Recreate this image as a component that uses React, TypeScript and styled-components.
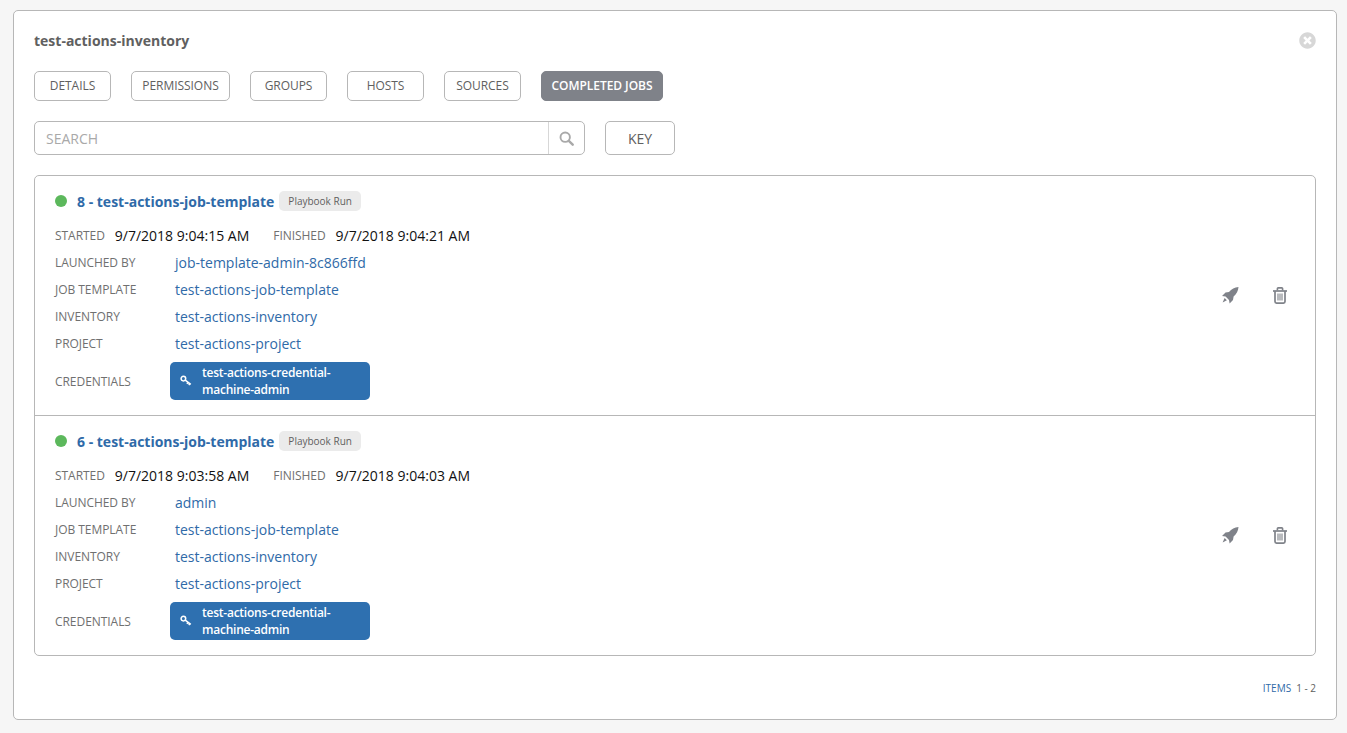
import styled, { createGlobalStyle } from 'styled-components'
import { FaTimesCircle } from 'react-icons/fa'

const GlobalStyle = createGlobalStyle`
  html, body {
    margin: 0;
    padding: 0;
    background: #f6f6f6;
  }
  body {
    font-family: 'Open Sans', 'Liberation Sans', sans-serif;
    color: #161b1f;
  }
  * {
    box-sizing: border-box;
  }
`

const Page = styled.div`
  padding: 10px 10px 13px 13px;
  height: 733px;
`

const Panel = styled.section`
  height: 710px;
  background: #fff;
  border: 1px solid #b7b7b7;
  border-radius: 5px;
  padding: 20px;
  display: flex;
  flex-direction: column;
`

const PanelHeader = styled.header`
  display: flex;
  justify-content: space-between;
  align-items: center;
  height: 18px;
  margin-bottom: 22px;
`

const PanelTitle = styled.h1`
  margin: 0;
  font-size: 14px;
  font-weight: 700;
  color: #606060;
`

const CloseIcon = styled(FaTimesCircle)`
  font-size: 17px;
  color: #d7d7d7;
`

const Tabs = styled.nav`
  display: flex;
  gap: 20px;
  margin-bottom: 20px;
`

const Tab = styled.button<{ $active?: boolean; $width: number }>`
  width: ${({ $width }) => $width}px;
  height: 30px;
  padding: 0 0 2px;
  font-family: inherit;
  font-size: 12px;
  letter-spacing: -0.05px;
  border-radius: 5px;
  border: 1px solid ${({ $active }) => ($active ? '#7f8289' : '#b7b7b7')};
  background: ${({ $active }) => ($active ? '#7f8289' : '#fff')};
  color: ${({ $active }) => ($active ? '#fff' : '#606060')};
  font-weight: ${({ $active }) => ($active ? 600 : 400)};
`

const SearchRow = styled.div`
  display: flex;
  gap: 20px;
  margin-bottom: 20px;
`

const SearchBox = styled.div`
  display: flex;
  width: 551px;
  height: 34px;
  border: 1px solid #b7b7b7;
  border-radius: 5px;
`

const SearchPlaceholder = styled.div`
  flex: 1;
  display: flex;
  align-items: center;
  padding-left: 11px;
  font-size: 14px;
  color: #a9a9a9;
`

const SearchButton = styled.div`
  width: 36px;
  display: flex;
  align-items: center;
  justify-content: center;
  border-left: 1px solid #d7d7d7;
`

const KeyButton = styled.button`
  width: 70px;
  height: 34px;
  padding: 0;
  font-family: inherit;
  font-size: 14px;
  color: #606060;
  background: #fff;
  border: 1px solid #b7b7b7;
  border-radius: 5px;
`

const JobList = styled.div`
  border: 1px solid #b7b7b7;
  border-radius: 5px;
`

const JobRow = styled.article`
  display: flex;
  justify-content: space-between;
  align-items: center;
  height: 239px;
  padding: 0 28px 0 20px;

  & + & {
    height: 240px;
    border-top: 1px solid #b7b7b7;
  }
`

const JobInfo = styled.div`
  align-self: flex-start;
  display: flex;
  flex-direction: column;
  padding-top: 15px;
`

const JobTitleRow = styled.div`
  display: flex;
  align-items: center;
  height: 20px;
  margin-bottom: 11px;
`

const StatusDot = styled.span`
  width: 12px;
  height: 12px;
  border-radius: 50%;
  background: #5cb85c;
  margin-right: 10px;
`

const JobName = styled.a`
  font-size: 14px;
  font-weight: 700;
  color: #2f6aa8;
`

const TypeTag = styled.span`
  margin-left: 5px;
  height: 20px;
  padding: 0 9px;
  display: flex;
  align-items: center;
  background: #ebebeb;
  border-radius: 5px;
  font-size: 10px;
  color: #606060;
`

const TimeRow = styled.div`
  display: flex;
  align-items: center;
  height: 27px;
`

const TimeLabel = styled.span<{ $gap?: number }>`
  font-size: 12px;
  letter-spacing: -0.05px;
  color: #707070;
  margin-left: ${({ $gap }) => $gap ?? 0}px;
  margin-right: 10px;
`

const TimeValue = styled.span`
  font-size: 14px;
  color: #111;
`

const DetailRow = styled.div`
  display: grid;
  grid-template-columns: 120px auto;
  align-items: center;
  height: 27px;
`

const CredentialRow = styled(DetailRow)`
  grid-template-columns: 115px auto;
  height: 38px;
  margin-top: 5px;
`

const DetailLabel = styled.span`
  font-size: 12px;
  letter-spacing: -0.05px;
  color: #707070;
`

const DetailLink = styled.a`
  font-size: 14px;
  color: #2f6aa8;
`

const CredentialChip = styled.a`
  width: 200px;
  height: 38px;
  display: flex;
  align-items: center;
  gap: 10px;
  padding-left: 10px;
  background: #2e70b0;
  border-radius: 5px;
  color: #fff;
  font-size: 12px;
  font-weight: 600;
  line-height: 17px;
  letter-spacing: -0.24px;
`

const KeySvg = styled.svg`
  width: 12px;
  height: 12px;
  flex: none;
`

const Actions = styled.div`
  display: flex;
  align-items: center;
  gap: 34px;
  margin-bottom: 1px;
  color: #7f8289;
`

const ActionSvg = styled.svg<{ $width: number }>`
  width: ${({ $width }) => $width}px;
  height: 17px;
  display: block;
`

const SearchSvg = styled.svg`
  width: 15px;
  height: 15px;
  display: block;
`

const Pagination = styled.footer`
  display: flex;
  justify-content: flex-end;
  gap: 5px;
  margin-top: 25px;
  font-size: 10px;
  line-height: 14px;
  color: #606060;
`

const PaginationLabel = styled.span`
  color: #2f6aa8;
`

const KeyIcon = () => (
  <KeySvg viewBox="0 0 12 12" fill="none" stroke="#fff" strokeWidth="1.5">
    <circle cx="3.4" cy="3.6" r="2.3" />
    <path d="M5.2 5.2 L10.8 9.4 M8 7.3 L6.9 8.8 M9.8 8.7 L8.8 10.1" />
  </KeySvg>
)

const SearchIcon = () => (
  <SearchSvg viewBox="0 0 15 15" fill="none" stroke="#a9a9a9">
    <circle cx="6.2" cy="6.2" r="4.7" strokeWidth="1.9" />
    <path d="M9.8 9.8 L13.7 13.7" strokeWidth="2.4" strokeLinecap="round" />
  </SearchSvg>
)

const RocketIcon = () => (
  <ActionSvg $width={18} viewBox="0 0 18 17" fill="currentColor">
    <path d="M17.5 0 C13.6 .3 10.5 2 8 5 L4.5 5.6 L1 9 L4.6 9.6 L8 12.9 L8.6 16.4 L12 13 L12.6 9.6 C15.6 7.1 17.2 4 17.5 0 Z" />
    <path d="M3.6 11 L5.9 13.3 L1.6 15.4 Z" />
  </ActionSvg>
)

const TrashIcon = () => (
  <ActionSvg $width={14} viewBox="0 0 14 17" fill="none" stroke="currentColor">
    <path d="M0 4 H14" strokeWidth="1.7" />
    <path d="M4.4 3.6 V1.6 Q4.4 .9 5.2 .9 H8.8 Q9.6 .9 9.6 1.6 V3.6" strokeWidth="1.6" />
    <path d="M2 4 V14.6 Q2 16.1 3.5 16.1 H10.5 Q12 16.1 12 14.6 V4" strokeWidth="1.7" />
    <path d="M5 6.6 V13.6 M7 6.6 V13.6 M9 6.6 V13.6" strokeWidth="1.1" />
  </ActionSvg>
)

const tabs = [
  { label: 'DETAILS', width: 77 },
  { label: 'PERMISSIONS', width: 99 },
  { label: 'GROUPS', width: 77 },
  { label: 'HOSTS', width: 77 },
  { label: 'SOURCES', width: 77 },
  { label: 'COMPLETED JOBS', width: 122, active: true },
]

const jobs = [
  { id: 8, started: '9/7/2018 9:04:15 AM', finished: '9/7/2018 9:04:21 AM', launchedBy: 'job-template-admin-8c866ffd' },
  { id: 6, started: '9/7/2018 9:03:58 AM', finished: '9/7/2018 9:04:03 AM', launchedBy: 'admin' },
]

const App = () => {
  return (
    <Page>
      <GlobalStyle />
      <Panel>
        <PanelHeader>
          <PanelTitle>test-actions-inventory</PanelTitle>
          <CloseIcon />
        </PanelHeader>

        <Tabs>
          {tabs.map((tab) => (
            <Tab key={tab.label} $active={tab.active} $width={tab.width}>
              {tab.label}
            </Tab>
          ))}
        </Tabs>

        <SearchRow>
          <SearchBox>
            <SearchPlaceholder>SEARCH</SearchPlaceholder>
            <SearchButton>
              <SearchIcon />
            </SearchButton>
          </SearchBox>
          <KeyButton>KEY</KeyButton>
        </SearchRow>

        <JobList>
          {jobs.map((job) => (
            <JobRow key={job.id}>
              <JobInfo>
                <JobTitleRow>
                  <StatusDot />
                  <JobName>{job.id} - test-actions-job-template</JobName>
                  <TypeTag>Playbook Run</TypeTag>
                </JobTitleRow>
                <TimeRow>
                  <TimeLabel>STARTED</TimeLabel>
                  <TimeValue>{job.started}</TimeValue>
                  <TimeLabel $gap={24}>FINISHED</TimeLabel>
                  <TimeValue>{job.finished}</TimeValue>
                </TimeRow>
                <DetailRow>
                  <DetailLabel>LAUNCHED BY</DetailLabel>
                  <DetailLink>{job.launchedBy}</DetailLink>
                </DetailRow>
                <DetailRow>
                  <DetailLabel>JOB TEMPLATE</DetailLabel>
                  <DetailLink>test-actions-job-template</DetailLink>
                </DetailRow>
                <DetailRow>
                  <DetailLabel>INVENTORY</DetailLabel>
                  <DetailLink>test-actions-inventory</DetailLink>
                </DetailRow>
                <DetailRow>
                  <DetailLabel>PROJECT</DetailLabel>
                  <DetailLink>test-actions-project</DetailLink>
                </DetailRow>
                <CredentialRow>
                  <DetailLabel>CREDENTIALS</DetailLabel>
                  <CredentialChip>
                    <KeyIcon />
                    <span>
                      test-actions-credential-
                      <br />
                      machine-admin
                    </span>
                  </CredentialChip>
                </CredentialRow>
              </JobInfo>
              <Actions>
                <RocketIcon />
                <TrashIcon />
              </Actions>
            </JobRow>
          ))}
        </JobList>

        <Pagination>
          <PaginationLabel>ITEMS</PaginationLabel>
          <span>1 - 2</span>
        </Pagination>
      </Panel>
    </Page>
  )
}

export default App
